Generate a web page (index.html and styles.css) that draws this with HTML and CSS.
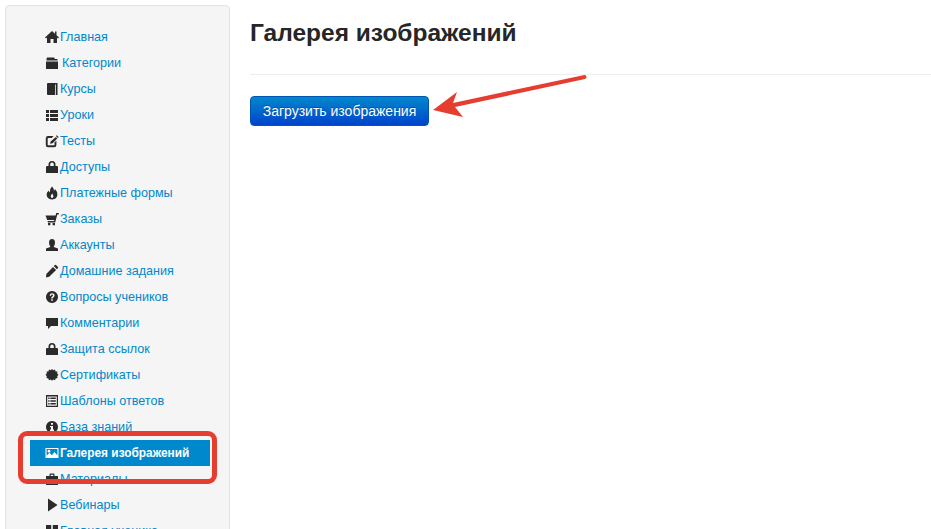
FILE: index.html
```html
<!DOCTYPE html>
<html lang="ru">
<head>
<meta charset="utf-8">
<title>Галерея изображений</title>
<link rel="stylesheet" href="styles.css">
</head>
<body>
<div class="page">
  <aside class="sidebar">
    <ul class="nav">
      <li><a href="#"><svg class="ico" viewBox="0 0 14 14"><path d="M7 1 L0 7.5 L1 8.5 L2 7.6 V13 H5.5 V9 H8.5 V13 H12 V7.6 L13 8.5 L14 7.5 L11.5 5.2 V1.5 H10 V3.8 Z"/></svg>Главная</a></li>
      <li class="gap"><a href="#"><svg class="ico" viewBox="0 0 14 14"><path d="M2 1.5 H9 L10 3 H12.5 V4.5 H1.5 V3 Z M1 5.5 H13 V13 H1 Z"/></svg>Категории</a></li>
      <li><a href="#"><svg class="ico" viewBox="0 0 14 14"><path d="M3 1 H12.5 V13 H3 Q2 13 2 12 V2 Q2 1 3 1 Z"/><path class="cut" d="M10.5 2.5 V13" /></svg>Курсы</a></li>
      <li><a href="#"><svg class="ico" viewBox="0 0 14 14"><path d="M1 2 H4 V5 H1 Z M5 2 H13 V5 H5 Z M1 6 H4 V9 H1 Z M5 6 H13 V9 H5 Z M1 10 H4 V13 H1 Z M5 10 H13 V13 H5 Z"/></svg>Уроки</a></li>
      <li><a href="#"><svg class="ico" viewBox="0 0 14 14"><path d="M3 2 H8.6 L6.8 3.9 H3.2 Q2.7 3.9 2.7 4.4 V10.8 Q2.7 11.3 3.2 11.3 H9 Q9.5 11.3 9.5 10.8 V8.6 L11.4 6.7 V11 Q11.4 13.2 9.2 13.2 H2.9 Q0.8 13.2 0.8 11 V4.2 Q0.8 2 3 2 Z M10.9 3 L12.3 4.4 L7.7 9.2 L5 9.8 L5.6 7.4 Z M11.7 1.2 L13.7 3.1 L12.9 3.9 L10.9 2 Z"/></svg>Тесты</a></li>
      <li><a href="#"><svg class="ico" viewBox="0 0 14 14"><path fill-rule="evenodd" d="M2 6 H3.5 V4.5 Q3.5 1 7 1 Q10.5 1 10.5 4.5 V6 H12 Q13 6 13 7 V13 H1 V7 Q1 6 2 6 Z M5.2 6 H8.8 V4.5 Q8.8 2.6 7 2.6 Q5.2 2.6 5.2 4.5 Z"/></svg>Доступы</a></li>
      <li><a href="#"><svg class="ico" viewBox="0 0 14 14"><path fill-rule="evenodd" d="M7 0.5 Q9.2 2.6 8.8 4.8 Q9.7 4.4 10 3 Q12.8 5.8 12.4 9 Q11.8 13 7.5 13.6 Q2.2 13.4 1.6 9 Q1.4 6.2 3.8 4.6 Q3.8 6 4.8 6.3 Q4.4 3 7 0.5 Z M7.2 7.6 Q5.6 9.4 5.7 10.8 Q6 11.9 7.1 11.9 Q8.4 11.7 8.4 10.5 Q8.4 9 7.2 7.6 Z"/></svg>Платежные формы</a></li>
      <li><a href="#"><svg class="ico" viewBox="0 0 14 14"><path d="M0.5 3.5 H10.6 L11.2 1 H13.8 V2.4 H12.3 L10.2 10.4 H3 L2.5 9 H9 L9.3 8 H2.2 Z M3 11 H5.4 V13.2 H3 Z M7.6 11 H10 V13.2 H7.6 Z"/></svg>Заказы</a></li>
      <li><a href="#"><svg class="ico" viewBox="0 0 14 14"><path d="M7 1 Q10 1 10 4.5 Q10 7 8.8 8.2 V9 L13 10.5 V13 H1 V10.5 L5.2 9 V8.2 Q4 7 4 4.5 Q4 1 7 1 Z"/></svg>Аккаунты</a></li>
      <li><a href="#"><svg class="ico" viewBox="0 0 14 14"><path d="M11 1 L13 3 Q13.5 3.6 13 4.1 L11.9 5.2 L8.8 2.1 L9.9 1 Q10.5 0.6 11 1 Z M8 2.9 L11.1 6 L4.2 12.8 L1 13.5 L1.3 10 Z"/></svg>Домашние задания</a></li>
      <li><a href="#"><svg class="ico" viewBox="0 0 14 14"><path fill-rule="evenodd" d="M7 1 A6 6 0 1 1 6.99 1 Z M4.6 5.5 L6 5.9 Q6.2 4.6 7 4.6 Q8 4.6 8 5.4 Q8 6 7.2 6.5 Q6.2 7.1 6.2 8.5 H7.8 Q7.8 7.7 8.6 7.2 Q9.6 6.5 9.6 5.3 Q9.5 3.2 7 3.2 Q5 3.2 4.6 5.5 Z M6.2 9.2 V10.8 H7.8 V9.2 Z"/></svg>Вопросы учеников</a></li>
      <li><a href="#"><svg class="ico" viewBox="0 0 14 14"><path d="M1 2 H13 V10 H6 L3 13 V10 H1 Z"/></svg>Комментарии</a></li>
      <li><a href="#"><svg class="ico" viewBox="0 0 14 14"><path fill-rule="evenodd" d="M2 6 H3.5 V4.5 Q3.5 1 7 1 Q10.5 1 10.5 4.5 V6 H12 Q13 6 13 7 V13 H1 V7 Q1 6 2 6 Z M5.2 6 H8.8 V4.5 Q8.8 2.6 7 2.6 Q5.2 2.6 5.2 4.5 Z"/></svg>Защита ссылок</a></li>
      <li><a href="#"><svg class="ico" viewBox="0 0 14 14"><path d="M7 1 L8.3 2.2 L10 1.6 L10.6 3.4 L12.4 3.6 L12.2 5.4 L13.5 6.8 L12.2 8.2 L12.5 10 L10.7 10.4 L10 12.2 L8.3 11.5 L7 12.8 L5.7 11.5 L4 12.2 L3.3 10.4 L1.5 10 L1.8 8.2 L0.5 6.8 L1.8 5.4 L1.6 3.6 L3.4 3.4 L4 1.6 L5.7 2.2 Z"/></svg>Сертификаты</a></li>
      <li><a href="#"><svg class="ico" viewBox="0 0 14 14"><path fill-rule="evenodd" d="M1 1 H13 V13 H1 Z M2.2 2.5 V11.7 H11.8 V2.5 Z M3.2 3.6 H4.6 V5 H3.2 Z M5.4 3.6 H10.8 V5 H5.4 Z M3.2 6.3 H4.6 V7.7 H3.2 Z M5.4 6.3 H10.8 V7.7 H5.4 Z M3.2 9 H4.6 V10.4 H3.2 Z M5.4 9 H10.8 V10.4 H5.4 Z"/></svg>Шаблоны ответов</a></li>
      <li><a href="#"><svg class="ico" viewBox="0 0 14 14"><path fill-rule="evenodd" d="M7 1 A6 6 0 1 1 6.99 1 Z M6 2.9 V4.8 H8 V2.9 Z M5 6 V7.2 H6 V9.6 H5 V10.9 H9 V9.6 H8 V6 Z"/></svg>База знаний</a></li>
      <li class="active"><a href="#"><svg class="ico" viewBox="0 0 14 14"><path fill-rule="evenodd" d="M0.5 2 H13.5 V12 H0.5 Z M1.6 3.1 V9.8 L4.5 6.8 L7 9.2 L9.5 6 L12.4 9.6 V3.1 Z M4 3.8 A1.4 1.4 0 1 0 4.01 3.8 Z"/></svg>Галерея изображений</a></li>
      <li><a href="#"><svg class="ico" viewBox="0 0 14 14"><path fill-rule="evenodd" d="M1 4 H4.5 V2.5 Q4.5 1.5 5.5 1.5 H8.5 Q9.5 1.5 9.5 2.5 V4 H13 V8 H8.5 V7 H5.5 V8 H1 Z M5.7 2.7 V4 H8.3 V2.7 Z M1 9 H5.5 V10 H8.5 V9 H13 V13 H1 Z"/></svg>Материалы</a></li>
      <li><a href="#"><svg class="ico" viewBox="0 0 14 14"><path d="M3 0.5 L12.5 7 L3 13.5 Z"/></svg>Вебинары</a></li>
      <li><a href="#"><svg class="ico" viewBox="0 0 14 14"><path d="M1 1 H6.2 V6.2 H1 Z M7.8 1 H13 V6.2 H7.8 Z M1 7.8 H6.2 V13 H1 Z M7.8 7.8 H13 V13 H7.8 Z"/></svg>Главная ученика</a></li>
    </ul>
  </aside>
  <main class="content">
    <h1 class="title">Галерея изображений</h1>
    <hr class="rule">
    <button class="btn" type="button">Загрузить изображения</button>
  </main>
</div>
<div class="mark-box"></div>
<svg class="mark-arrow" viewBox="0 0 160 50" width="160" height="50"><path d="M1 38 L25 20 L21 31 L152.5 3 Q154.5 3 154.5 5 Q154.5 6.5 153 7 L23 35 L31 45 Z" fill="#e53d30"/></svg>
</body>
</html>
```
FILE: styles.css
```css
html, body {
  margin: 0;
  padding: 0;
  height: 529px;
  overflow: hidden;
  background: #fff;
}
body {
  font-family: "Liberation Sans", Arial, sans-serif;
  font-size: 13px;
  color: #333;
  position: relative;
}
.page {
  display: flex;
  align-items: flex-start;
  gap: 20px;
  padding: 5px 0 0 5px;
}
.sidebar {
  width: 223px;
  flex: none;
  box-sizing: content-box;
  background: #f5f5f5;
  border: 1px solid #e3e3e3;
  border-radius: 4px;
  padding: 18px 0 19px;
}
.nav {
  list-style: none;
  margin: 0 19px 0 24px;
  padding: 0;
}
.nav li {
  height: 26px;
}
.nav a {
  display: flex;
  align-items: center;
  height: 26px;
  padding-left: 15px;
  color: #0088cc;
  text-decoration: none;
  font-size: 12.6px;
}
.ico {
  width: 14px;
  height: 14px;
  margin-right: 1px;
  flex: none;
  fill: #2b2b2b;
}
.cut {
  fill: none;
  stroke: #f5f5f5;
  stroke-width: 0.8;
}
.gap .ico {
  margin-right: 3px;
}
.nav .active a {
  background: #0088cc;
  color: #fff;
  font-weight: bold;
  font-size: 11.9px;
}
.active .ico {
  fill: #fff;
}
.content {
  flex: 1;
  min-width: 0;
}
.title {
  margin: 13px 0 0;
  font-size: 24.5px;
  line-height: 30px;
  font-weight: bold;
  color: #262626;
}
.rule {
  margin: 26px 0 21px;
  border: 0;
  border-top: 1px solid #eee;
  height: 0;
}
.btn {
  display: block;
  width: 179px;
  height: 30px;
  padding: 0;
  border: 1px solid #0055b3;
  border-radius: 4px;
  background: linear-gradient(to bottom, #0088cc, #0044cc);
  color: #fff;
  font-family: inherit;
  font-size: 14px;
  text-shadow: 0 -1px 0 rgba(0,0,0,.25);
}
.mark-box {
  position: absolute;
  left: 18px;
  top: 431px;
  width: 199px;
  height: 53px;
  box-sizing: border-box;
  border: 5px solid #e53d30;
  border-radius: 9px;
}
.mark-arrow {
  position: absolute;
  left: 432px;
  top: 72px;
}
```
